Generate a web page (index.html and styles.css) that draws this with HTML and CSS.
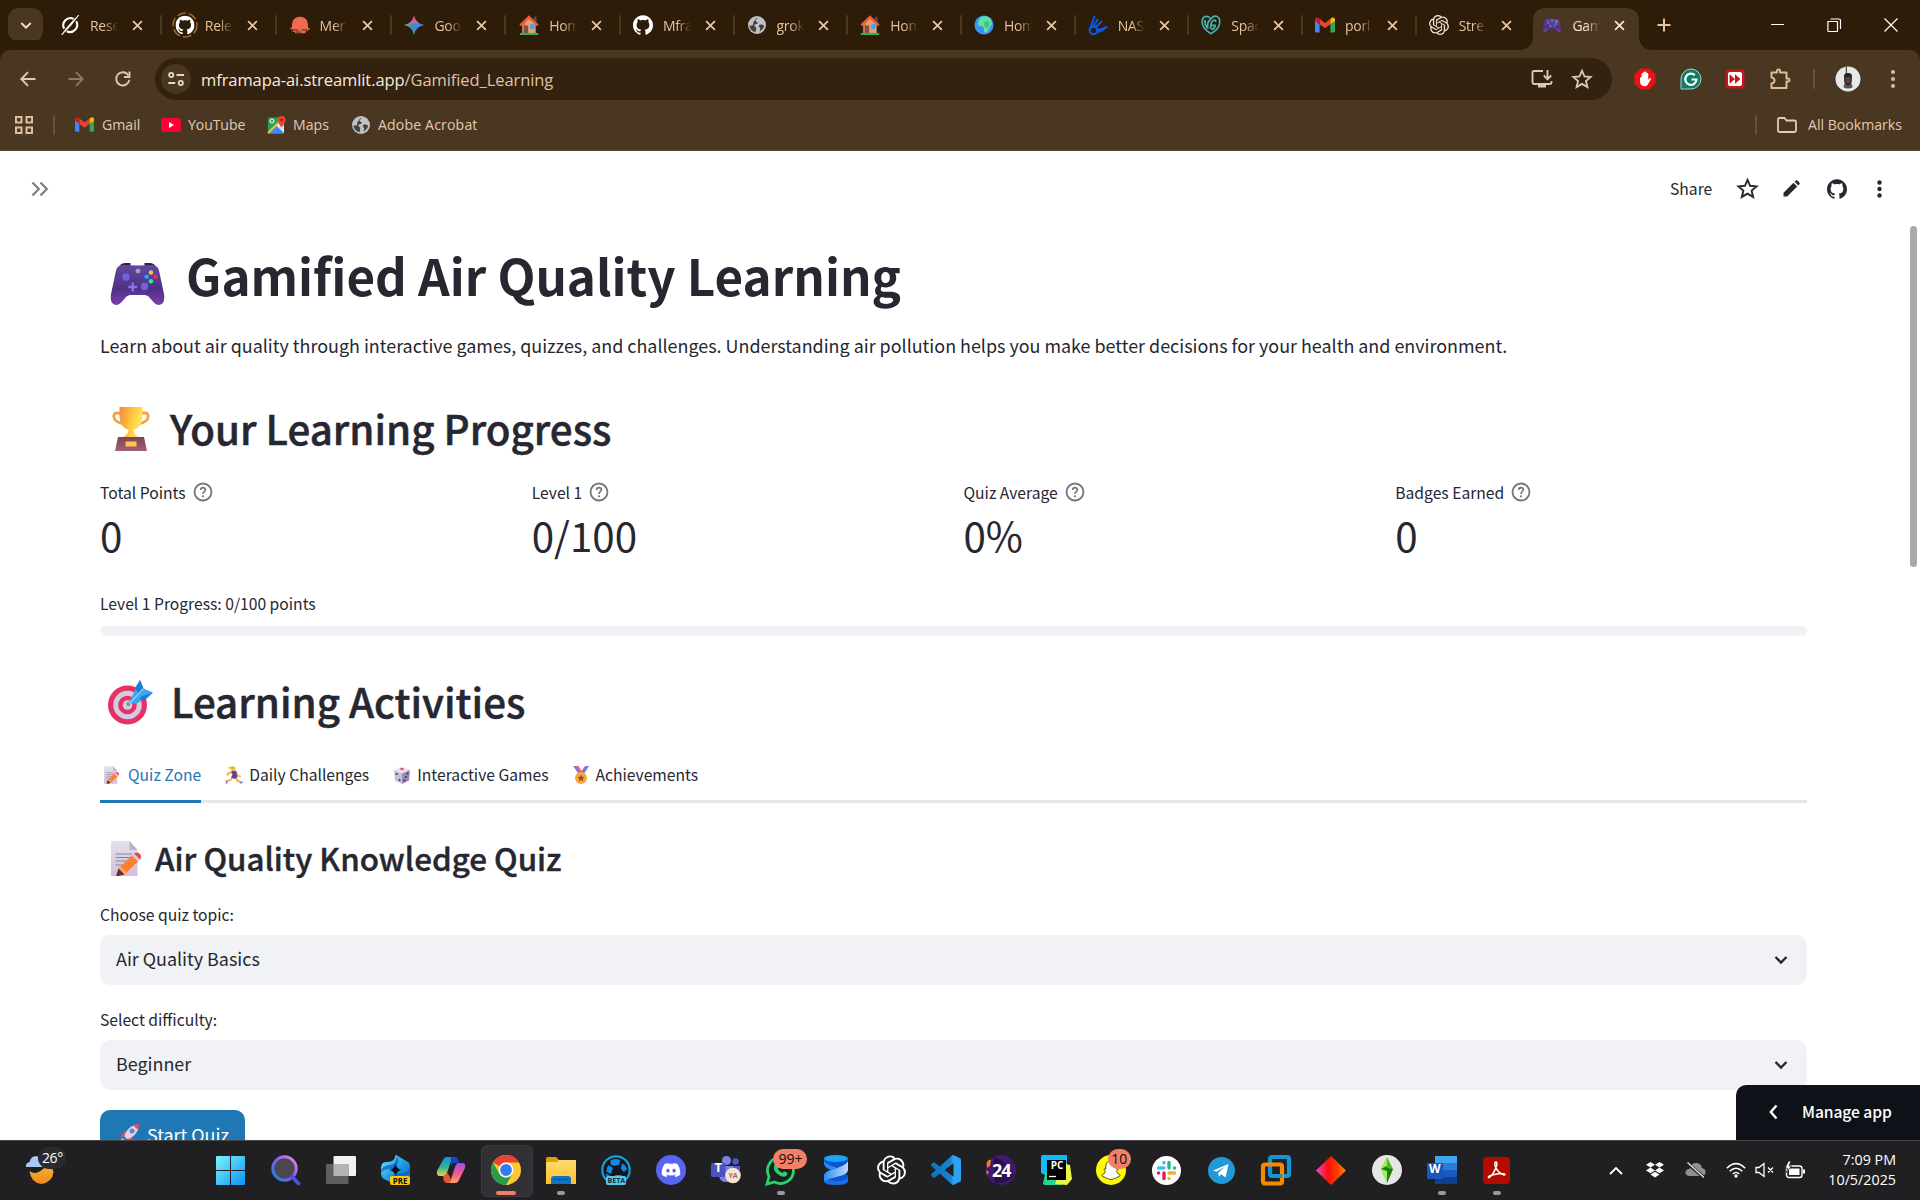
FILE: index.html
```html
<!DOCTYPE html>
<html lang="en">
<head>
<meta charset="utf-8">
<title>Gamified Air Quality Learning</title>
<link rel="stylesheet" href="styles.css">
</head>
<body>
<svg class="defs" width="0" height="0" aria-hidden="true">
  <defs>
    <linearGradient id="gPad" x1="0" y1="0" x2="0" y2="1"><stop offset="0" stop-color="#5f4aa0"/><stop offset=".6" stop-color="#4f3087"/><stop offset="1" stop-color="#7a3fae"/></linearGradient>
    <linearGradient id="gCup" x1="0" y1="0" x2="1" y2=".3"><stop offset="0" stop-color="#f5873f"/><stop offset=".55" stop-color="#ffc23e"/><stop offset="1" stop-color="#ffe95c"/></linearGradient>
    <linearGradient id="gBase" x1="0" y1="0" x2="0" y2="1"><stop offset="0" stop-color="#7a4458"/><stop offset="1" stop-color="#a3606f"/></linearGradient>
    <linearGradient id="gPaper" x1="0" y1="0" x2="0" y2="1"><stop offset="0" stop-color="#e4e0ea"/><stop offset="1" stop-color="#cfc0dc"/></linearGradient>
    <linearGradient id="gWin" x1="0" y1="0" x2="1" y2="1"><stop offset="0" stop-color="#7df3ff"/><stop offset="1" stop-color="#0a94f5"/></linearGradient>
    <linearGradient id="gFind" x1="1" y1="0" x2="0" y2="1"><stop offset="0" stop-color="#f08ad8"/><stop offset=".45" stop-color="#8a5cf0"/><stop offset="1" stop-color="#1285e0"/></linearGradient>
    <linearGradient id="gBlue" x1="0" y1="0" x2="1" y2="1"><stop offset="0" stop-color="#74ecff"/><stop offset=".5" stop-color="#1f9fe6"/><stop offset="1" stop-color="#0b5fc2"/></linearGradient>
    <linearGradient id="gCopA" x1="0" y1="0" x2="0" y2="1"><stop offset="0" stop-color="#1a8be8"/><stop offset=".5" stop-color="#27b39b"/><stop offset="1" stop-color="#f2d03a"/></linearGradient>
    <linearGradient id="gCopB" x1="0" y1="0" x2="0" y2="1"><stop offset="0" stop-color="#a14df0"/><stop offset=".5" stop-color="#f0568f"/><stop offset="1" stop-color="#ffa05c"/></linearGradient>
    <linearGradient id="gFold" x1="0" y1="0" x2="0" y2="1"><stop offset="0" stop-color="#ffdc6e"/><stop offset="1" stop-color="#ffc02e"/></linearGradient>
    <linearGradient id="gDia" x1="0" y1="0" x2="1" y2="0"><stop offset="0" stop-color="#e64fc0"/><stop offset=".4" stop-color="#ff0c0c"/><stop offset=".7" stop-color="#ff3c00"/><stop offset="1" stop-color="#ff8a00"/></linearGradient>
    <linearGradient id="gGem" x1="0" y1="0" x2="0" y2="1"><stop offset="0" stop-color="#ea4335"/><stop offset=".35" stop-color="#c46ab0"/><stop offset=".55" stop-color="#3b82f6"/><stop offset="1" stop-color="#34a853"/></linearGradient>
    <linearGradient id="gGem2" x1="0" y1="0" x2="1" y2="0"><stop offset="0" stop-color="#fbbc04"/><stop offset=".4" stop-color="#3ba55d" stop-opacity=".5"/><stop offset=".6" stop-color="#3b82f6" stop-opacity=".6"/><stop offset="1" stop-color="#3b82f6"/></linearGradient>
    <linearGradient id="gMoon" x1="0" y1="0" x2="0" y2="1"><stop offset="0" stop-color="#f7b53a"/><stop offset="1" stop-color="#f08a1c"/></linearGradient>
    <linearGradient id="gCode" x1="0" y1="0" x2="1" y2="0"><stop offset="0" stop-color="#1173bd"/><stop offset=".65" stop-color="#1684d0"/><stop offset=".75" stop-color="#2ba5f3"/><stop offset="1" stop-color="#2ba5f3"/></linearGradient>
    <linearGradient id="gRib" x1="0" y1="0" x2="1" y2="0"><stop offset="0" stop-color="#2a8df5"/><stop offset="1" stop-color="#c4d8ff"/></linearGradient>

    <symbol id="close" viewBox="0 0 12 12"><path d="M1.200 1.200l9.600 9.600M10.800 1.200l-9.600 9.600" stroke="currentColor" stroke-width="2" fill="none"/></symbol>
    <symbol id="github" viewBox="0 0 24 24"><path fill="currentColor" d="M12 .297c-6.63 0-12 5.373-12 12 0 5.303 3.438 9.8 8.205 11.385.6.113.82-.258.82-.577 0-.285-.01-1.04-.015-2.04-3.338.724-4.042-1.61-4.042-1.61C4.422 18.07 3.633 17.7 3.633 17.7c-1.087-.744.084-.729.084-.729 1.205.084 1.838 1.236 1.838 1.236 1.07 1.835 2.809 1.305 3.495.998.108-.776.417-1.305.76-1.605-2.665-.3-5.466-1.332-5.466-5.93 0-1.31.465-2.38 1.235-3.22-.135-.303-.54-1.523.105-3.176 0 0 1.005-.322 3.3 1.23.96-.267 1.98-.399 3-.405 1.02.006 2.04.138 3 .405 2.28-1.552 3.285-1.23 3.285-1.23.645 1.653.24 2.873.12 3.176.765.84 1.23 1.91 1.23 3.22 0 4.61-2.805 5.625-5.475 5.92.42.36.81 1.096.81 2.22 0 1.606-.015 2.896-.015 3.286 0 .315.21.69.825.57C20.565 22.092 24 17.592 24 12.297c0-6.627-5.373-12-12-12"/></symbol>
    <symbol id="openai" viewBox="0 0 24 24"><path fill="currentColor" d="M22.2819 9.8211a5.9847 5.9847 0 0 0-.5157-4.9108 6.0462 6.0462 0 0 0-6.5098-2.9A6.0651 6.0651 0 0 0 4.9807 4.1818a5.9847 5.9847 0 0 0-3.9977 2.9 6.0462 6.0462 0 0 0 .7427 7.0966 5.98 5.98 0 0 0 .511 4.9107 6.051 6.051 0 0 0 6.5146 2.9001A5.9847 5.9847 0 0 0 13.2599 24a6.0557 6.0557 0 0 0 5.7718-4.2058 5.9894 5.9894 0 0 0 3.9977-2.9001 6.0557 6.0557 0 0 0-.7475-7.0729zm-9.022 12.6081a4.4755 4.4755 0 0 1-2.8764-1.0408l.1419-.0804 4.7783-2.7582a.7948.7948 0 0 0 .3927-.6813v-6.7369l2.02 1.1686a.071.071 0 0 1 .038.052v5.5826a4.504 4.504 0 0 1-4.4945 4.4944zm-9.6607-4.1254a4.4708 4.4708 0 0 1-.5346-3.0137l.142.0852 4.783 2.7582a.7712.7712 0 0 0 .7806 0l5.8428-3.3685v2.3324a.0804.0804 0 0 1-.0332.0615L9.74 19.9502a4.4992 4.4992 0 0 1-6.1408-1.6464zM2.3408 7.8956a4.485 4.485 0 0 1 2.3655-1.9728V11.6a.7664.7664 0 0 0 .3879.6765l5.8144 3.3543-2.0201 1.1685a.0757.0757 0 0 1-.071 0l-4.8303-2.7865A4.504 4.504 0 0 1 2.3408 7.872zm16.5963 3.8558L13.1038 8.364 15.1192 7.2a.0757.0757 0 0 1 .071 0l4.8303 2.7913a4.4944 4.4944 0 0 1-.6765 8.1042v-5.6772a.79.79 0 0 0-.407-.667zm2.0107-3.0231l-.142-.0852-4.7735-2.7818a.7759.7759 0 0 0-.7854 0L9.409 9.2297V6.8974a.0662.0662 0 0 1 .0284-.0615l4.8303-2.7866a4.4992 4.4992 0 0 1 6.6802 4.66zM8.3065 12.863l-2.02-1.1638a.0804.0804 0 0 1-.038-.0567V6.0742a4.4992 4.4992 0 0 1 7.3757-3.4537l-.142.0805L8.704 5.459a.7948.7948 0 0 0-.3927.6813zm1.0976-2.3654l2.602-1.4998 2.6069 1.4998v2.9994l-2.5974 1.4997-2.6067-1.4997Z"/></symbol>
    <symbol id="gmail" viewBox="0 0 24 18"><path fill="#4285f4" d="M0 3v13.500C0 17.300.7 18 1.600 18H5.500V8z"/><path fill="#34a853" d="M24 3v13.500c0 .8-.7 1.500-1.600 1.500H18.500V8z"/><path fill="#ea4335" d="M5.500 8V1.500L12 6.500l6.500-5V8L12 13z"/><path fill="#c5221f" d="M0 2.500C0 .3 2.400-.8 4 .4l1.500 1.100V8.200L0 4.200z"/><path fill="#fbbc04" d="M24 2.500C24 .3 21.600-.8 20 .4l-1.500 1.100V8.200L24 4.200z"/></symbol>
    <symbol id="house" viewBox="0 0 24 24"><path fill="#e7a06a" d="M4 11l8-7 8 7v11H4z"/><path fill="#c9784f" d="M4 11l3-2v13H4z"/><path fill="#5c5048" d="M18 2h3v7l-3-3z"/><path d="M1.500 12.500L12 2.500l10.500 10" fill="none" stroke="#f2583e" stroke-width="3"/><path fill="#8a4b43" d="M6 12.500h5V22H6z"/><path fill="#35a7f0" d="M13.500 11h5v6h-5z"/><path fill="#2fae5d" d="M1 21.500h22V24H1z"/></symbol>
    <symbol id="globe" viewBox="0 0 24 24"><circle cx="12" cy="12" r="12" fill="#bfc2c5"/><path fill="#45413d" d="M13 2.500c-1 2-3 1.800-3 3.800 0 1.500 3 1 3 3 0 1.700-4 1-4.500 3C8 14 11 14 11 16.500c0 2-1 3-.5 5C5.500 21 2 17 2 12c3 2 5 .5 5-2 0-2 1-3 2-4 .8-1 .5-3 4-3.500zM15 12c2-1 5-.5 6.500 1-.5 3-3 6-6 7.500 0-2 1.500-3 .5-4.500-1-1-2.500-3-1-4z"/></symbol>
    <symbol id="earth" viewBox="0 0 24 24"><circle cx="12" cy="12" r="11.500" fill="#3b94f5"/><path fill="#5fe3a0" d="M8 3c5-3 10-1 12 2l2 6c-2 1-2 3-4 5-1 3-3 6-5 5-2-2 0-5-2-7-2-1-6 0-6-3 0-4 1-6 3-8z"/><path fill="#3fc489" d="M12 8l5-1 2 4-3 5-3-1-1-4z"/></symbol>
    <symbol id="pad" viewBox="0 0 54 42"><path fill="#3b1a4a" d="M9 3.500Q10 0 15 0h5v6H8zM45 3.500Q44 0 39 0h-5v6h12z"/><path fill="url(#gPad)" d="M12 2q15 .8 30 0 5 0 6.500 5.500L53.500 31q1.500 10-5 11-3.500 0-6.500-4l-4-4.500Q36.500 32 34 32H20q-2.500 0-4 1.500L12 38q-3 4-6.500 4-6.500-1-5-11L5.500 7.500Q7 2 12 2z"/><circle cx="15.500" cy="14" r="3.700" fill="#6f63d8"/><circle cx="34" cy="23.500" r="3.700" fill="#6f63d8"/><path d="M22.200 19.500v9M17.700 24h9" stroke="#8277ea" stroke-width="2.400"/><circle cx="27.500" cy="8" r="2.400" fill="#a79ea8"/><circle cx="40.500" cy="9.500" r="2.300" fill="#ffbc4b"/><circle cx="36.200" cy="13.800" r="2.300" fill="#1aa9ff"/><circle cx="45" cy="13.800" r="2.300" fill="#f7284f"/><circle cx="40.500" cy="18.200" r="2.300" fill="#35e59b"/></symbol>
    <symbol id="memo" viewBox="0 0 30 35"><path fill="url(#gPaper)" d="M0 0h18.500L26.500 9v26H0z"/><path fill="#bdb2cb" d="M18.500 0l8 9h-8z"/><path d="M4.500 13h16.500M4.500 16.500h16.500M4.500 20h15M4.500 24h9" stroke="#8b8295" stroke-width="1.100"/><path fill="#ff7f32" d="M7.500 27.500L21 14.500l6 6L13.500 33.500z"/><path fill="#fda85a" d="M7.500 27.500l2-2 6 6-2 2z"/><path fill="#c9cdea" d="M21 14.500l2-2 6 6-2 2z"/><path fill="#f4463e" d="M23 12.500q3-2 5.500 0t1 5.500l-.5.500z"/><path fill="#5d3038" d="M5 35l2.500-7.500 6 6L7 35z"/></symbol>
    <symbol id="help" viewBox="0 0 20 20"><circle cx="10" cy="10" r="8.500" fill="none" stroke="#75767e" stroke-width="1.800"/><path d="M7.600 7.900q.2-2.300 2.400-2.300t2.400 2q0 1.200-1.200 2T10 11.900" fill="none" stroke="#75767e" stroke-width="1.700"/><circle cx="10" cy="14.300" r="1.100" fill="#75767e"/></symbol>
    <symbol id="down" viewBox="0 0 14 10"><path d="M1.500 2L7 7.500 12.500 2" fill="none" stroke="#262730" stroke-width="2.400"/></symbol>
    <symbol id="star" viewBox="0 0 24 24"><path d="M12 3l2.700 6.200 6.700.6-5.100 4.400 1.600 6.600L12 17.300l-5.900 3.500 1.600-6.600-5.100-4.400 6.700-.6z" fill="none" stroke="currentColor" stroke-width="2"/></symbol>
  </defs>
</svg>

<div class="screen">
  <div class="tabstrip">
    <div class="tabsearch"><svg width="12" height="9" viewBox="0 0 14 10"><path d="M1.500 2L7 7.500 12.500 2" fill="none" stroke="#f3dcc4" stroke-width="2.400"/></svg></div>
    <div class="tabs">
      <div class="tab"><svg class="fav" viewBox="0 0 24 24"><path d="M19.500 7.500A8.700 8.700 0 0 1 8 19.500M16.500 4.600A8.700 8.700 0 0 0 5 16.500" fill="none" stroke="#fff" stroke-width="2.500"/><path d="M2 24Q8 14 22.500 0 14 13 2 24z" fill="#fff" stroke="#fff"/></svg><span class="name">Rese</span><svg class="x"><use href="#close"/></svg></div>
      <div class="tab"><svg class="fav ring" viewBox="0 0 26 26"><circle cx="13" cy="13" r="12" fill="none" stroke="#9a6a30" stroke-width="1.500" stroke-dasharray="9 3"/><circle cx="13" cy="13" r="9" fill="#2d1c08"/><svg x="3.500" y="3.500" width="19" height="19" color="#fff"><use href="#github"/></svg></svg><span class="name">Rele</span><svg class="x"><use href="#close"/></svg></div>
      <div class="tab"><svg class="fav" viewBox="0 0 24 24"><path fill="#ee6c4d" d="M2.500 15C1.500 6 6 2 12 2s10.500 4 9.500 13l2 1v2h-2v1.500h-3V22H6v-2H3v-3H.5v-2z"/><path d="M2 18h8M14 18h8M7 20.500h6" stroke="#2d1c08" stroke-width="1"/></svg><span class="name">Mer</span><svg class="x"><use href="#close"/></svg></div>
      <div class="tab"><svg class="fav" viewBox="0 0 24 24"><path fill="url(#gGem)" d="M12 0q2 10 12 12-10 2-12 12-2-10-12-12Q10 10 12 0z"/><path fill="url(#gGem2)" d="M12 7q1 4.500 12 5-10 2-12 6-2-5-12-6 11-.5 12-5z"/></svg><span class="name">Goo</span><svg class="x"><use href="#close"/></svg></div>
      <div class="tab"><svg class="fav"><use href="#house"/></svg><span class="name">Hom</span><svg class="x"><use href="#close"/></svg></div>
      <div class="tab"><svg class="fav white"><use href="#github"/></svg><span class="name">Mfra</span><svg class="x"><use href="#close"/></svg></div>
      <div class="tab"><svg class="fav small"><use href="#globe"/></svg><span class="name">grok</span><svg class="x"><use href="#close"/></svg></div>
      <div class="tab"><svg class="fav"><use href="#house"/></svg><span class="name">Hom</span><svg class="x"><use href="#close"/></svg></div>
      <div class="tab"><svg class="fav"><use href="#earth"/></svg><span class="name">Hom</span><svg class="x"><use href="#close"/></svg></div>
      <div class="tab"><svg class="fav" viewBox="0 0 24 24"><path d="M2 18L8 1M6 14l6-9M9 15l8-8M11 18q7-1 12-4-6 5-12 7" fill="none" stroke="#0b57e8" stroke-width="2.400"/><circle cx="6.500" cy="18.500" r="4.500" fill="none" stroke="#0b57e8" stroke-width="2.600"/></svg><span class="name">NAS</span><svg class="x"><use href="#close"/></svg></div>
      <div class="tab"><svg class="fav" viewBox="0 0 24 24"><path d="M12 22.500C4 18 .8 12 1.500 6.500 2.200 1.500 7 0 11 3.500M12 22.500c8-4.500 11.200-10.500 10.500-16C21.800 1.500 17.500 0 13.500 3 8.500 6.500 7 12 8.500 16.500M12.500 12.500H17q-.5 4-3 4.500-2.800 0-2.500-4 .8-6 4.500-7 2 0 1.500 2.500M5 6q-1 5 2.500 9.500" fill="none" stroke="#46b5b1" stroke-width="2"/></svg><span class="name">Spac</span><svg class="x"><use href="#close"/></svg></div>
      <div class="tab"><svg class="fav"><use href="#gmail"/></svg><span class="name">porl</span><svg class="x"><use href="#close"/></svg></div>
      <div class="tab"><svg class="fav cream"><use href="#openai"/></svg><span class="name">Stre</span><svg class="x"><use href="#close"/></svg></div>
      <div class="tab active"><svg class="fav small"><use href="#pad"/></svg><span class="name">Gam</span><svg class="x"><use href="#close"/></svg></div>
    </div>
    <svg class="newtab" width="14" height="14" viewBox="0 0 14 14"><path d="M7 .5v13M.5 7h13" stroke="#e6c39f" stroke-width="2"/></svg>
    <div class="winbtns">
      <svg width="14" height="14" viewBox="0 0 14 14"><path d="M1 6.500h13" stroke="#fff"/></svg>
      <svg width="14" height="14" viewBox="0 0 14 14"><path d="M1 3.500h9q.5 0 .5.500v9q0 .5-.5.500H1.500Q1 13.500.900 13V4zM3.500 1h8.500q1.500 0 1.500 1.500V11" fill="none" stroke="#fff" stroke-width="1.200"/></svg>
      <svg width="14" height="14" viewBox="0 0 14 14"><path d="M.5.500l13 13M13.500.5l-13 13" stroke="#fff" stroke-width="1.200"/></svg>
    </div>
  </div>

  <div class="toolbar">
    <div class="nav">
      <svg width="16" height="16" viewBox="0 0 16 16"><path d="M15.500 8H1.500M8 1.200L1.300 8 8 14.800" fill="none" stroke="#e6c8a8" stroke-width="1.900"/></svg>
      <svg width="16" height="16" viewBox="0 0 16 16"><path d="M.5 8h14M8 1.200L14.700 8 8 14.800" fill="none" stroke="#8d7760" stroke-width="1.900"/></svg>
      <svg width="16" height="16" viewBox="0 0 16 16"><path d="M14.300 8.800A6.600 6.600 0 1 1 13.300 4.200M14.500.6V6H9" fill="none" stroke="#e6c8a8" stroke-width="1.900"/></svg>
    </div>
    <div class="omnibox">
      <span class="siteinfo"><svg width="16" height="14" viewBox="0 0 16 14"><g fill="none" stroke="#e8d8c6" stroke-width="1.800"><circle cx="3.200" cy="3" r="2.100"/><path d="M8.500 3H16M.3 11h7"/><circle cx="12.800" cy="11" r="2.100"/></g></svg></span>
      <span class="url">mframapa-ai.streamlit.app<span class="path">/Gamified_Learning</span></span>
      <svg class="inst" width="22" height="20" viewBox="0 0 22 20"><path d="M12 2H3q-1.500 0-1.500 1.500v10Q1.500 15 3 15h16q1.500 0 1.500-1.500V12" fill="none" stroke="#dcc9b4" stroke-width="1.900"/><path fill="#dcc9b4" d="M7 15h8v3.500H7z"/><path d="M16.500 1v9M12.800 6.500l3.700 3.700 3.700-3.700" fill="none" stroke="#dcc9b4" stroke-width="1.900"/></svg>
      <svg class="bmstar" width="22" height="22"><use href="#star"/></svg>
    </div>
    <div class="ext">
      <svg width="22" height="22" viewBox="0 0 22 22"><path fill="#ee1010" d="M6.500.5h9l6 6v9l-6 6h-9l-6-6v-9z"/><path fill="#fff" d="M6 9l1.500 1V5.500q1-1 1.700 0V9V4q1-1 1.700 0V9V4q1-1 1.700 0V9V5.500q1-1 1.700 0V12l1.500-1.800q1.500-.5 1.300.8L13.500 17q-1 1.300-3 1.300Q6.500 18 6 14z"/></svg>
      <svg width="22" height="22" viewBox="0 0 22 22"><path fill="#0f7d66" stroke="#a9cfc6" d="M11 1a10 10 0 0 1 0 20H1V11A10 10 0 0 1 11 1z"/><path d="M14.800 7.200A5.600 5.600 0 1 0 16.500 11.500H11.500" fill="none" stroke="#fff" stroke-width="2.200"/></svg>
      <svg width="20" height="20" viewBox="0 0 20 20"><rect x=".5" y=".5" width="19" height="19" rx="3" fill="#c8161a"/><rect x="3" y="3" width="14" height="14" rx="2" fill="#fff"/><path fill="#c8161a" d="M4.500 5.200L10 10l-5.500 4.800zM10 5.200l5.500 4.800-5.500 4.800z"/></svg>
      <svg width="22" height="22" viewBox="0 0 22 22"><path d="M2.500 4.500H8q-.5-3 1.500-3t1.500 3h6.500v6q3-.5 3 1.500t-3 1.500V20H2.500v-4.500q3-.3 3-3t-3-3z" fill="none" stroke="#e0bd97" stroke-width="2" stroke-linejoin="round"/></svg>
      <i class="sep"></i>
      <svg width="26" height="26" viewBox="0 0 26 26"><circle cx="13" cy="13" r="12.500" fill="#e8e8e6"/><path fill="#26232b" d="M10.800.8h1V8h-1zM9 10q0-3 4-3t4 3l-.3 6q-.7 4-3.700 4t-3.700-4z"/><path fill="#5b4033" d="M10.500 11h5v5q-1 2-2.500 2t-2.500-2z"/><path fill="#4d5568" d="M9 18q4 3 8 0l.5 3.500q-4.500 2-9 0z"/></svg>
      <svg width="6" height="20" viewBox="0 0 6 20" fill="#e0bd97"><circle cx="3" cy="3" r="2"/><circle cx="3" cy="10" r="2"/><circle cx="3" cy="17" r="2"/></svg>
    </div>
  </div>

  <div class="bookmarks">
    <svg class="apps" width="18" height="18" viewBox="0 0 18 18"><g fill="none" stroke="#dcbfa2" stroke-width="2"><path d="M1 1h5.500v5.500H1zM11.500 1H17v5.500h-5.500zM1 11.500h5.500V17H1zM11.500 11.500H17V17h-5.500z"/></g></svg>
    <i class="sep"></i>
    <span class="bm gm"><svg width="19" height="15"><use href="#gmail"/></svg>Gmail</span>
    <span class="bm yt"><svg width="20" height="14" viewBox="0 0 20 14"><rect width="20" height="14" rx="3" fill="#f03"/><path fill="#fff" d="M8 4l5 3-5 3z"/></svg>YouTube</span>
    <span class="bm mp"><svg width="18" height="18" viewBox="0 0 18 18"><rect y="1.500" width="16" height="16" rx="1" fill="#2ba24c"/><path fill="#4285f4" d="M0 17.500L8 9l8 8.500z"/><path fill="#fff" d="M8.500 9.500L16 3v14z"/><path d="M0 17L15 2.500" stroke="#f5c21b" stroke-width="2.200"/><path fill="#e0e3e6" d="M8.500 9.500l7.500 7v-7L12 6z"/><circle cx="4" cy="5" r="2" fill="none" stroke="#fff"/><path fill="#ea4335" d="M13.500 11.500Q9.800 6.500 9.800 4a3.900 3.900 0 0 1 7.800 0q0 2.500-4.100 7.500z"/><circle cx="13.600" cy="4" r="1.400" fill="#a32018"/></svg>Maps</span>
    <span class="bm aa"><svg width="18" height="18"><use href="#globe"/></svg>Adobe Acrobat</span>
    <span class="allbm"><i class="sep"></i><svg width="20" height="16" viewBox="0 0 20 16"><path d="M1 2.500Q1 1 2.500 1h5l2 2.500h8Q19 3.500 19 5v8.500q0 1.500-1.500 1.500h-15Q1 15 1 13.500z" fill="none" stroke="#e0ccb8" stroke-width="1.800"/></svg><span>All Bookmarks</span></span>
  </div>

  <div class="page">
    <div class="appbar">
      <svg class="expand" width="18" height="16" viewBox="0 0 18 16"><path d="M1.500 1.500L7.800 8 1.500 14.500M9.500 1.500L15.800 8l-6.300 6.500" fill="none" stroke="#7c7d85" stroke-width="2.200"/></svg>
      <div class="actions">
        <span>Share</span>
        <svg class="a1" width="23" height="23"><use href="#star"/></svg>
        <svg class="a2" width="17" height="17" viewBox="0 0 17 17"><path fill="#262730" d="M.5 16.500V12.800L10.500 2.800l3.700 3.700-10 10zM11.600 1.700l1.100-1.100q.9-.8 1.800 0l1.900 1.900q.8.9 0 1.800l-1.100 1.100z"/></svg>
        <svg class="a3" width="20" height="20"><use href="#github"/></svg>
        <svg class="a4" width="5" height="18" viewBox="0 0 5 18" fill="#262730"><circle cx="2.500" cy="2.500" r="2.200"/><circle cx="2.500" cy="9" r="2.200"/><circle cx="2.500" cy="15.500" r="2.200"/></svg>
      </div>
    </div>

    <div class="main">
      <h1><svg width="55" height="42" class="i-pad"><use href="#pad"/></svg>Gamified Air Quality Learning</h1>
      <p class="lead">Learn about air quality through interactive games, quizzes, and challenges. Understanding air pollution helps you make better decisions for your health and environment.</p>

      <h2 class="h-prog"><svg class="i-cup" width="38" height="44" viewBox="0 0 38 44"><path d="M9 7Q2 4 1.800 9.500 2 15 12 17M29 7q7-3 7.200 2.500Q36 15 26 17" fill="none" stroke="#f3a53b" stroke-width="2.800"/><path fill="url(#gCup)" d="M7.500 0h23v10q-1 11-9 13 0 4 5.500 7H11q5.500-3 5.500-7-8-2-9-13z"/><path fill="url(#gBase)" d="M6 30h26l3 14H3z"/><rect x="13.500" y="34.500" width="11" height="5" fill="#fbc650"/></svg>Your Learning Progress</h2>
      <div class="metrics">
        <div class="metric"><div class="label">Total Points<svg width="20" height="20"><use href="#help"/></svg></div><div class="value">0</div></div>
        <div class="metric"><div class="label">Level 1<svg width="20" height="20"><use href="#help"/></svg></div><div class="value">0/100</div></div>
        <div class="metric"><div class="label">Quiz Average<svg width="20" height="20"><use href="#help"/></svg></div><div class="value">0%</div></div>
        <div class="metric"><div class="label">Badges Earned<svg width="20" height="20"><use href="#help"/></svg></div><div class="value">0</div></div>
      </div>
      <div class="ptext">Level 1 Progress: 0/100 points</div>
      <div class="bar"></div>

      <h2 class="h-act"><svg class="i-dart" width="46" height="44" viewBox="0 0 46 44"><circle cx="19.500" cy="25" r="19.500" fill="#e23463"/><circle cx="19.500" cy="25" r="14.300" fill="#d5cbe0"/><circle cx="19.500" cy="25" r="9.300" fill="#e23463"/><circle cx="19.500" cy="25" r="4.800" fill="#d5cbe0"/><circle cx="20.500" cy="24" r="2" fill="#8a7f9c"/><path fill="#3ea6ee" d="M20.500 23.500l6.500-13 5-10.500 3.500 8.500L45 12.500l-9 6-7 5z"/><path fill="#1d7bdc" d="M27 8l5-8 3.500 8.500-5 5zM34 16l11-3.500-8 7.500-6-.5z"/><path d="M21 24L35.500 8.500" stroke="#7fd0fa" stroke-width="1.500"/></svg>Learning Activities</h2>
      <div class="subtabs">
        <span class="st on"><svg width="15" height="18"><use href="#memo"/></svg>Quiz Zone</span>
        <span class="st"><svg width="18" height="18" viewBox="0 0 18 18"><path d="M7.500 6.500l-4 .5-1.500 2.500M8 11l-2.500 3L1 15.500M11 11.500l1 3 4 1.500" fill="none" stroke="#f5b14a" stroke-width="1.900"/><path d="M11 6l1.500 3.500L16 10.500" fill="none" stroke="#f5b14a" stroke-width="1.700"/><path fill="#5b43a5" d="M6 5.200l5-.7 1.500 6.500-2.500 2-4-1.500 1.500-3z"/><circle cx="8" cy="2.600" r="2.400" fill="#f8b233"/><path d="M6.500 1.200L3.500 2.200" stroke="#f8b233" stroke-width="1.600"/><path d="M1.500 14.500v3.300M14.800 17l3-1" stroke="#8a7ad0" stroke-width="1.600"/></svg>Daily Challenges</span>
        <span class="st"><svg width="18" height="18" viewBox="0 0 18 18"><path fill="#e6dfee" d="M1 4l8-3.500L17 4l-8 3.500z"/><path fill="#c8bed6" d="M1 4l8 3.500V18l-7-3.500z"/><path fill="#9a8cab" d="M17 4L9 7.500V18l7-3.500z"/><ellipse cx="9" cy="3" rx="2" ry="1" fill="#e0446e"/><g fill="#463263"><circle cx="3.700" cy="8" r="1.100"/><circle cx="6.500" cy="14" r="1.100"/><circle cx="14.500" cy="7.500" r="1.100"/><circle cx="11.500" cy="14.500" r="1.100"/><circle cx="13" cy="11" r="1.100"/></g></svg>Interactive Games</span>
        <span class="st"><svg width="16" height="18" viewBox="0 0 16 18"><path fill="#5d82e8" d="M0 0h3.500l5 7H5z"/><path fill="#f4577c" d="M3 0h2.500l3 5L12 0h2L9.500 7.500h-3z"/><path fill="#5d82e8" d="M16 0h-3L8.500 7h3z"/><circle cx="8" cy="12" r="6" fill="#f9a938"/><path fill="#94502c" d="M8 8.500l1.100 2.300 2.500.3-1.800 1.700.5 2.500L8 14.100l-2.300 1.200.5-2.500-1.800-1.700 2.500-.3z"/></svg>Achievements</span>
      </div>

      <h3><svg class="i-memo" width="30" height="35"><use href="#memo"/></svg>Air Quality Knowledge Quiz</h3>
      <div class="flabel">Choose quiz topic:</div>
      <div class="select"><span>Air Quality Basics</span><svg width="14" height="10"><use href="#down"/></svg></div>
      <div class="flabel second">Select difficulty:</div>
      <div class="select"><span>Beginner</span><svg width="14" height="10"><use href="#down"/></svg></div>
      <div class="start"><svg width="21" height="21" viewBox="0 0 21 21"><path fill="#e8476c" d="M5 9l5-2-3 6-6 1zM13 17l1-5-5 3-2 6z"/><path fill="#dcd7e6" d="M5.500 13.500Q7 5 16 2l3.500 3Q17 14 8 16z"/><path fill="#e8476c" d="M15 2.200Q18 .5 20.500.8 20.500 3.500 19 6q-3-.5-4-3.800z"/><circle cx="13" cy="8" r="2.500" fill="#6b7fd8"/><path fill="#f9a23c" d="M0 20.500q1-5 4-5.500l2 2q-.5 3-6 3.500z"/></svg>Start Quiz</div>
    </div>

    <div class="scrollthumb"></div>
    <div class="manage"><svg width="9" height="16" viewBox="0 0 9 16"><path d="M7.500 1.500L1.800 8l5.700 6.500" fill="none" stroke="#fff" stroke-width="2.400"/></svg><span>Manage app</span></div>
  </div>

  <div class="taskbar">
    <div class="weather"><svg width="30" height="30" viewBox="0 0 30 30"><path fill="url(#gMoon)" d="M3.500 17q5 4 11 0t6-8q6 4 7 9-1 10-12 12Q5 29 3.500 17z"/><path fill="#a9c8f3" d="M0 13q-.5-4 3.500-5Q5 2 10 2q5 1 6 6 2 2 1 5z"/></svg><span>26°</span></div>
    <div class="apps-row">
      <div class="app"><svg width="29" height="29" viewBox="0 0 29 29"><path fill="url(#gWin)" d="M0 1q0-1 1-1h13v14H0zM15 0h13q1 0 1 1v13H15zM0 15h14v14H1q-1 0-1-1zM15 15h14v13q0 1-1 1H15z"/></svg></div>
      <div class="app"><svg width="30" height="30" viewBox="0 0 30 30"><circle cx="13.500" cy="13.500" r="11.700" fill="#4a484c" stroke="url(#gFind)" stroke-width="3"/><path d="M21.500 22l6 6.500" stroke="#4a52e0" stroke-width="4" stroke-linecap="round"/></svg></div>
      <div class="app"><svg width="30" height="28" viewBox="0 0 30 28"><rect x="7.500" width="22.500" height="20" rx="1" fill="#f2f2f2"/><rect y="8" width="22.500" height="20" rx="1" fill="#5f5f5f"/><path fill="#b4b4b4" d="M7.500 8h15v12h-15z"/></svg></div>
      <div class="app"><svg width="30" height="30" viewBox="0 0 30 30"><path fill="url(#gBlue)" d="M1 9q1-2 5-2 7 0 8-5 0-3 2-1.500L27 7q2 1 2 4v9q0 3-3 4l-9 5q-2 1-4 0L3 24q-3-2-3-5v-7z"/><path fill="#0a60c8" d="M16 1q2 3 1 7-2 6-8 6-7 0-9 4v-2q1-5 8-6 7 0 8-9zM29 12v5q-2 4-8 5t-8 7l-4-2q1-8 10-9 8 0 10-6z" opacity=".75"/><path fill="#0b1220" d="M14.500 9q1.200 5 6 6-4.800 1.200-6 6-1.200-4.800-6-6 4.800-1 6-6z"/></svg><b class="tag pre">PRE</b></div>
      <div class="app"><svg width="28" height="26" viewBox="0 0 28 26"><path fill="url(#gCopA)" d="M6 3q1-3 4-3h8q-3 0-4 4l-4 12q-1 3-4 3H3q-4 0-3-5z"/><path fill="#1645c0" d="M14 0h4q3 0 3.500 3.500L22 6h-4q-3 0-4 2z"/><path fill="url(#gCopB)" d="M22 23q-1 3-4 3h-8q3 0 4-4l4-12q1-4 4-4h3q4 0 3 5z"/><path fill="#e8542e" d="M6 19q3 0 4.500-3l2 3q1.500 3 1 5t-3.500 2q-3 0-3.500-4z"/></svg></div>
      <div class="app open"><svg width="30" height="30" viewBox="0 0 30 30"><circle cx="15" cy="15" r="15" fill="#fcc934"/><path fill="#ea4335" d="M2 7.500A15 15 0 0 1 28 7.500H15a7.500 7.500 0 0 0-6.500 3.800z"/><path fill="#2a9d4a" d="M2 7.500A15 15 0 0 0 15 30l6.500-11.250a7.500 7.500 0 0 1-13 0z"/><circle cx="15" cy="15" r="7.400" fill="#fff"/><circle cx="15" cy="15" r="5.900" fill="#2d7cf0"/></svg></div>
      <div class="app run"><svg width="30" height="27" viewBox="0 0 30 27"><path fill="#e0a00e" d="M0 2Q0 0 2 0h8l4 4v6H0z"/><path fill="url(#gFold)" d="M0 5h11l2-2h17v24H0z"/><path fill="#0f72c4" d="M5 22q0-3 3-3h14q3 0 3 3v5H5z"/><path d="M8 22.500h14" stroke="#0a4d8c" stroke-width="1.300"/></svg></div>
      <div class="app"><svg width="30" height="30" viewBox="0 0 30 30"><circle cx="15" cy="15" r="13.700" fill="#15161c" stroke="#149fd8" stroke-width="2.200"/><path fill="#1588e0" d="M9.500 5.500Q14 3 19 5l-.5 4.500-5 1.500-4-1.500zM21 8q4 2.500 5 6l-3 3-3-3zM7.500 10l4.500 3-2 6-4.500-2q-.5-4 2-7zM4.500 18.500l5.500 2.500 1.500 6q-5.500-2.500-7-8.500zM14 20h6l4 3q-4 4-9 4z"/></svg><b class="tag beta">BETA</b></div>
      <div class="app"><svg width="30" height="30" viewBox="0 0 30 30"><circle cx="15" cy="15" r="15" fill="#5865f2"/><g transform="translate(5.700 5.700) scale(.775)"><path fill="#fff" d="M20.317 4.3698a19.7913 19.7913 0 00-4.8851-1.5152.0741.0741 0 00-.0785.0371c-.211.3753-.4447.8648-.6083 1.2495-1.8447-.2762-3.68-.2762-5.4868 0-.1636-.3933-.4058-.8742-.6177-1.2495a.077.077 0 00-.0785-.037 19.7363 19.7363 0 00-4.8852 1.515.0699.0699 0 00-.0321.0277C.5334 9.0458-.319 13.5799.0992 18.0578a.0824.0824 0 00.0312.0561c2.0528 1.5076 4.0413 2.4228 5.9929 3.0294a.0777.0777 0 00.0842-.0276c.4616-.6304.8731-1.2952 1.226-1.9942a.076.076 0 00-.0416-.1057c-.6528-.2476-1.2743-.5495-1.8722-.8923a.077.077 0 01-.0076-.1277c.1258-.0943.2517-.1923.3718-.2914a.0743.0743 0 01.0776-.0105c3.9278 1.7933 8.18 1.7933 12.0614 0a.0739.0739 0 01.0785.0095c.1202.099.246.1981.3728.2924a.077.077 0 01-.0066.1276 12.2986 12.2986 0 01-1.873.8914.0766.0766 0 00-.0407.1067c.3604.698.7719 1.3628 1.225 1.9932a.076.076 0 00.0842.0286c1.961-.6067 3.9495-1.5219 6.0023-3.0294a.077.077 0 00.0313-.0552c.5004-5.177-.8382-9.6739-3.5485-13.6604a.061.061 0 00-.0312-.0286zM8.02 15.3312c-1.1825 0-2.1569-1.0857-2.1569-2.419 0-1.3332.9555-2.4189 2.157-2.4189 1.2108 0 2.1757 1.0952 2.1568 2.419 0 1.3332-.9555 2.4189-2.1569 2.4189zm7.9748 0c-1.1825 0-2.1569-1.0857-2.1569-2.419 0-1.3332.9554-2.4189 2.1569-2.4189 1.2108 0 2.1757 1.0952 2.1568 2.419 0 1.3332-.946 2.4189-2.1568 2.4189Z"/></g></svg></div>
      <div class="app"><svg width="30" height="28" viewBox="0 0 30 28"><circle cx="15.500" cy="4.500" r="4.500" fill="#7b83eb"/><circle cx="24.500" cy="5.500" r="3.200" fill="#5059c9"/><path fill="#7b83eb" d="M8 10h14v10q-1 6-7 6t-7-6z"/><path fill="#5059c9" d="M22 10h7v10l-7 3z"/><rect y="7" width="14.500" height="14" rx="1.500" fill="#4b53bc"/><circle cx="22" cy="19.500" r="7.800" fill="#f6e3d3"/></svg><b class="teams-t">T</b><b class="teams-ya">YA</b></div>
      <div class="app run"><svg width="31" height="31" viewBox="0 0 31 31"><path d="M2 29l2-7.500A13 13 0 1 1 9.500 27z" fill="#202024" stroke="#27d367" stroke-width="2.800"/><path fill="#27d367" d="M10.500 8.500q1.800-.8 2.500.8l1 2.500-1.300 2q1.500 3 4.600 4.200l1.700-1.800 3.300 1.600q.3 3-3 4-3.300.3-7.300-3.300T9 11.500q.2-2.200 1.500-3z"/></svg><b class="badge wide">99+</b></div>
      <div class="app"><svg width="24" height="30" viewBox="0 0 24 30"><path fill="#0a55d0" d="M0 3.500q12 7 24 0V9q-3 5-12 6Q2 15 0 9z"/><ellipse cx="12" cy="3.500" rx="12" ry="3.500" fill="#1fa3f5"/><path fill="#0a55d0" d="M0 20q2-5 12-5 9 0 12 6v5.500H0z"/><path fill="#1b6df0" d="M0 21v5.500Q1 30 12 30t12-3.500V22q-3 4-12 4-9-.5-12-5z"/><path fill="url(#gRib)" d="M24 6.500v9q-1 4-10 6-8 1.500-13.500 5Q0 25 0 21q0-4 8-6.500Q21 11 24 6.500z"/><path fill="#2a8df5" d="M0 4q0 4 6 6.500l7 2.500-6 2Q0 12 0 8z"/></svg></div>
      <div class="app white"><svg width="29" height="30"><use href="#openai"/></svg></div>
      <div class="app"><svg width="30" height="30" viewBox="0 0 24 24"><path fill="url(#gCode)" d="M23.150 2.587L18.210.21a1.494 1.494 0 0 0-1.705.29l-9.460 8.630-4.120-3.128a.999.999 0 0 0-1.276.057L.327 7.261A1 1 0 0 0 .326 8.740L3.899 12 .326 15.260a1 1 0 0 0 .001 1.479L1.650 17.940a.999.999 0 0 0 1.276.057l4.120-3.128 9.460 8.630a1.492 1.492 0 0 0 1.704.290l4.942-2.377A1.500 1.500 0 0 0 24 20.060V3.939a1.500 1.500 0 0 0-.850-1.352zm-5.146 14.861L10.826 12l7.178-5.448v10.896z"/></svg></div>
      <div class="app"><svg width="30" height="30" viewBox="0 0 30 30"><circle cx="15" cy="15" r="15" fill="#43186f"/><path fill="#2a0f4e" d="M8 2q14 4 20 18-8 10-20 8z"/><path fill="#f47a20" d="M.5 8Q2 4 5 5l-1 6-3 2zM0 15l3 2-2 3z"/></svg><b class="n24">24</b></div>
      <div class="app"><svg width="31" height="30" viewBox="0 0 31 30"><path fill="#0fbcf9" d="M2 0h24v12L8 22 0 18V2q0-2 2-2z"/><path fill="#1fd98b" d="M2 28l3-12 16 10v4H4q-2 0-2-2z"/><path fill="#e9f542" d="M21 8l8 2 2 14-5 6-12-1z"/><path fill="#000" d="M6 5h19v20H6z"/><path d="M8 21.500h7" stroke="#fff" stroke-width="1.300"/></svg><b class="pc">PC</b></div>
      <div class="app"><svg width="30" height="30" viewBox="0 0 30 30"><circle cx="15" cy="15" r="15" fill="#fffc00"/><path fill="#fff" stroke="#222" stroke-width=".8" d="M15 6q5 0 5.200 5v3q2-.5 2 .6-2 1.200-1.500 2.200 1.500 3 3.500 3.500-.3 1.700-3.500 2-.4 1.500-2.200 1-1.200 1.200-3.500 1.200T11.500 23.300q-1.800.5-2.200-1-3.200-.3-3.500-2 2-.5 3.500-3.500.5-1-1.500-2.200 0-1.100 2-.6v-3Q10 6 15 6z"/></svg><b class="badge">10</b></div>
      <div class="app"><svg width="29" height="29" viewBox="0 0 29 29"><circle cx="14.500" cy="14.500" r="14.500" fill="#fff"/><g stroke-width="3.400" stroke-linecap="round"><path stroke="#36c5f0" d="M12 6.500v.2M6.500 12h5.500"/><path stroke="#2eb67d" d="M17 6.500V12M22.500 12h.1"/><path stroke="#e01e5a" d="M12 17v5.500M6.500 17h.1"/><path stroke="#ecb22e" d="M17 17h5.500M17 22.500v.1"/></g></svg></div>
      <div class="app"><svg width="27" height="27" viewBox="0 0 27 27"><circle cx="13.500" cy="13.500" r="13.500" fill="#2298d4"/><path fill="#fff" d="M5 13.500L20.500 7l-2.800 13.500-4.500-3.300-2.400 2.500-.5-4 6.700-6-8.500 5z"/></svg></div>
      <div class="app"><svg width="30" height="30" viewBox="0 0 30 30"><rect x="9" y="2" width="19" height="19" rx="2" fill="none" stroke="#1296d4" stroke-width="4.200"/><rect x="2" y="9.500" width="19" height="19" rx="2" fill="none" stroke="#f38b00" stroke-width="4.200"/><path d="M9 16.500V12M16 21h5" stroke="#1296d4" stroke-width="4.200"/></svg></div>
      <div class="app"><svg width="30" height="29" viewBox="0 0 30 29"><path fill="url(#gDia)" d="M15 0l15 14.500L15 29 0 14.500z"/></svg></div>
      <div class="app"><svg width="30" height="30" viewBox="0 0 30 30"><circle cx="15" cy="15" r="15" fill="#e6e6e6"/><path fill="#49c11a" d="M15 2l6 12-6 14-6-14z"/><path fill="#9df05c" d="M15 2v26L9 14z"/><path fill="#1f7a12" d="M15 13l6 1-6 14zM9 14l6-3v5z"/></svg></div>
      <div class="app run"><svg width="30" height="28" viewBox="0 0 30 28"><path fill="#41a5ee" d="M8 0h22v7H8z"/><path fill="#2b7cd3" d="M8 7h22v7H8z"/><path fill="#185abd" d="M8 14h22v7H8z"/><path fill="#103f91" d="M8 21h22v7H8z"/><rect y="7" width="16" height="16" rx="1" fill="#1a55b8"/></svg><b class="word">W</b></div>
      <div class="app run"><svg width="27" height="27" viewBox="0 0 27 27"><rect width="27" height="27" rx="4" fill="#b30b00"/><path d="M13 5q-1.700 0-1 3.500 2 7 9 9.500 1.500 0 .5-1-5-1.800-15.500 2.200-1.300 1.800.3 1.300Q11 17 13.800 8 14 5 13 5z" fill="none" stroke="#fff" stroke-width="1.500"/></svg></div>
    </div>
    <div class="tray">
      <svg class="t1" width="14" height="9" viewBox="0 0 14 9"><path d="M1 8l6-6 6 6" fill="none" stroke="#fff" stroke-width="1.800"/></svg>
      <svg class="t2" width="18" height="16" viewBox="0 0 18 16" fill="#fff"><path d="M4.500 0L9 2.800 4.500 5.600 0 2.800zM13.500 0L18 2.800l-4.500 2.800L9 2.800zM4.500 5.600L9 8.400l-4.500 2.800L0 8.400zM13.500 5.600L18 8.400l-4.500 2.800L9 8.400zM9 9.800l4.500 2.700L9 15.500l-4.500-3z"/></svg>
      <svg class="t3" width="21" height="16" viewBox="0 0 21 16"><path fill="#8f8f8f" d="M4 14q-4-1-3.500-4T5 6.500Q6 1 11 1t6 5q4 1 3.500 4.500T17 14z"/><path d="M2 1l17 14.500" stroke="#202024" stroke-width="3"/><path d="M2.500.500l16.500 15" stroke="#eee" stroke-width="1.200"/></svg>
      <svg class="t4" width="20" height="16" viewBox="0 0 20 16"><g fill="none" stroke="#fff" stroke-width="1.500"><path d="M.8 6.200Q10-3 19.200 6.200M3.700 9.200q6.300-6 12.600 0M6.600 12q3.400-3 6.800 0"/></g><circle cx="10" cy="14" r="1.700" fill="#fff"/></svg>
      <svg class="t5" width="20" height="16" viewBox="0 0 20 16"><path d="M1 5.500h3L9 1.500v13l-5-4H1zM13 5.500l5 5M18 5.500l-5 5" fill="none" stroke="#fff" stroke-width="1.300"/></svg>
      <svg class="t6" width="20" height="18" viewBox="0 0 20 18"><rect x="1.500" y="5" width="15.500" height="11.500" rx="2.500" fill="none" stroke="#fff" stroke-width="1.400"/><path fill="#fff" d="M4 7.500h10.500V14H4zM18 8.500h2v4h-2z"/><path fill="#fff" stroke="#202024" stroke-width=".8" d="M3.500 0L0 7h2.500L1.500 11.500 6.500 5H4l2-5z"/></svg>
      <div class="clock"><div>7:09 PM</div><div>10/5/2025</div></div>
    </div>
  </div>
</div>
</body>
</html>
```
FILE: styles.css
```css
* { box-sizing: border-box; }
body { margin: 0; overflow: hidden; background: #fff; }
svg { display: block; flex: none; overflow: visible; }
.defs { position: absolute; }
.screen { width: 1920px; height: 1200px; display: flex; flex-direction: column; overflow: hidden; font-family: "Open Sans", "Noto Sans", sans-serif; }
.sep { display: block; width: 2px; height: 20px; border-radius: 1px; background: #6b5039; flex: none; }

/* tab strip */
.tabstrip { height: 50px; flex: none; background: #2d1c08; display: flex; align-items: center; padding-left: 8px; }
.tabsearch { width: 35px; height: 34px; border-radius: 11px; background: #4a3722; display: flex; align-items: center; justify-content: center; }
.tabs { display: flex; height: 50px; margin-left: 5px; }
.tab { width: 113.700px; height: 50px; display: flex; align-items: center; padding-left: 12px; color: #e6c39f; font-size: 14px; position: relative; }
.tab:nth-child(-n+4) { width: 114.800px; }
.tab:not(.active):not(:nth-child(13))::after { content: ""; width: 2px; height: 20px; border-radius: 1px; background: #4a3722; margin-left: 17px; }
.fav { width: 20px; height: 20px; margin: 0 10px 0 0; }
.fav.ring { width: 26px; height: 26px; margin: 0 7px 0 -3px; }
.fav.small { width: 18px; height: 18px; margin: 0 11px 0 1px; }
.white { color: #fff; }
.cream { color: #f3e3d0; }
.name { width: 28px; overflow: hidden; white-space: nowrap; letter-spacing: -.3px; -webkit-mask-image: linear-gradient(90deg, #000 50%, transparent); mask-image: linear-gradient(90deg, #000 50%, transparent); }
.x { width: 11px; height: 11px; margin-left: 14px; }
.tab.active { color: #f3e3d0; z-index: 0; }
.tab.active::before { content: ""; position: absolute; z-index: -1; left: 3px; top: 8px; width: 106px; height: 42px; border-radius: 12px 12px 0 0; background: #4a3721; }
.tab.active::after { content: ""; position: absolute; z-index: -1; left: -9px; bottom: 0; width: 130px; height: 12px; background: radial-gradient(circle at 0 0, transparent 11.500px, #4a3721 12px) 0 0/12px 12px no-repeat, radial-gradient(circle at 100% 0, transparent 11.500px, #4a3721 12px) 100% 0/12px 12px no-repeat; }
.newtab { margin-left: 13px; }
.winbtns { display: flex; gap: 43px; margin-left: auto; padding-right: 22px; }

/* toolbar */
.toolbar { height: 50px; flex: none; background: #4a3721; border-radius: 10px 10px 0 0; box-shadow: 0 -10px 0 0 #2d1c08; display: flex; align-items: flex-start; padding-top: 8px; }
.nav { display: flex; gap: 31.500px; padding: 13px 0 0 20px; width: 155px; flex: none; }
.omnibox { width: 1457px; height: 42px; border-radius: 21px; background: #33220f; display: flex; align-items: center; padding-left: 6px; flex: none; }
.siteinfo { width: 30px; height: 30px; border-radius: 50%; background: #4a3721; display: flex; align-items: center; justify-content: center; }
.url { margin-left: 10px; font-size: 16.500px; letter-spacing: -.08px; color: #fbeada; white-space: nowrap; }
.path { color: #dcc3a8; }
.inst { margin-left: auto; }
.bmstar { margin: 0 19px 0 18px; color: #dcc9b4; }
.ext { display: flex; align-items: center; height: 42px; padding-left: 22px; gap: 23.700px; width: 308px; }
.ext .sep { margin: 0 -3px 0 -2px; }
.ext svg:last-child { margin-left: 5px; }

.bookmarks { height: 51px; flex: none; background: #4a3721; border-bottom: 1px solid #5e4637; display: flex; align-items: center; color: #e0cab2; font-size: 14.100px; line-height: 20px; padding: 0 0 1px 15px; }
.bm { display: flex; align-items: center; white-space: nowrap; }
.bookmarks > .sep { margin: 0 20px; }
.gm { width: 86px; gap: 8px; }
.yt { width: 107px; gap: 7px; letter-spacing: -.1px; }
.mp { width: 84px; gap: 7px; }
.aa { gap: 8px; letter-spacing: .15px; }
.allbm { display: flex; align-items: center; margin-left: auto; width: 165px; white-space: nowrap; }
.allbm svg { margin: 0 11px 0 20px; }

/* page */
.page { height: 989px; flex: none; background: #fff; position: relative; overflow: hidden; color: #262730; font-family: "Noto Sans CJK SC", "Noto Sans CJK JP", sans-serif; }
.appbar { height: 75px; display: flex; align-items: center; justify-content: space-between; padding-left: 31px; font-size: 15.700px; }
.actions { display: flex; align-items: center; width: 250px; }
.a1 { margin-left: 24px; }
.a2 { margin-left: 24px; }
.a3 { margin-left: 27px; }
.a4 { margin-left: 30px; }
.main { width: 1707px; margin-left: 100px; }
h1, h2, h3, p { margin: 0; white-space: nowrap; display: flex; align-items: center; }
h1 { height: 66px; margin-top: 16px; font-size: 49.350px; font-weight: 700; line-height: 66px; }
.i-pad { margin: 17px 21px 0 10px; }
.lead { height: 32px; margin-top: 21px; font-size: 17.910px; }
h2 { height: 54px; font-size: 40.300px; line-height: 54px; font-weight: 500; -webkit-text-stroke: .5px #262730; }
.h-prog { margin-top: 40px; }
.i-cup { margin: 1px 20px 0 12px; }
.metrics { display: grid; grid-template-columns: repeat(4, 1fr); column-gap: 20px; margin-top: 22px; }
.label { height: 30px; display: flex; align-items: center; gap: 7px; font-size: 15.670px; }
.value { height: 54px; line-height: 54px; margin-top: 1px; font-size: 40.300px; }
.ptext { height: 28px; line-height: 28px; margin-top: 28px; font-size: 15.670px; }
.bar { height: 10px; margin-top: 8px; border-radius: 5px; background: #f0f2f6; }
.h-act { margin-top: 38px; }
.i-dart { margin: 2px 17px 0 8px; }
.subtabs { height: 54px; margin-top: 21px; border-bottom: 3px solid #e6e6e9; display: flex; gap: 20px; font-size: 15.670px; }
.st { height: 54px; line-height: 51px; display: flex; align-items: center; padding: 0 0 3px 4px; gap: 6px; white-space: nowrap; }
.st.on { color: #1f77b4; border-bottom: 3px solid #1f77b4; padding-bottom: 0; gap: 9px; }
.st:last-child { gap: 7px; }
h3 { height: 42px; margin-top: 34px; font-size: 31.350px; font-weight: 500; line-height: 42px; -webkit-text-stroke: .4px #262730; }
.i-memo { margin: 0 14px 0 11px; }
.flabel { height: 26px; line-height: 26px; margin-top: 23px; font-size: 15.670px; }
.flabel.second { margin-top: 22px; }
.select { height: 50px; margin-top: 7px; border-radius: 10px; background: #f0f2f6; display: flex; align-items: center; justify-content: space-between; padding: 0 19px 0 16px; font-size: 17.910px; }
.select span { line-height: 44px; height: 48px; }
.start { width: 145px; height: 50px; margin-top: 20px; border-radius: 10px; background: #1f77b4; color: #fff; display: flex; align-items: center; gap: 7px; padding: 0 0 3px 19px; font-size: 17.910px; white-space: nowrap; }
.scrollthumb { position: absolute; left: 1910px; top: 75px; width: 7px; height: 341px; border-radius: 4px; background: #a8a9ad; }
.manage { position: absolute; right: 0; bottom: 0; width: 184px; height: 55px; border-radius: 10px 0 0 0; background: #0e1117; color: #fff; display: flex; align-items: center; gap: 24px; padding: 0 0 2px 33px; font-size: 15.670px; white-space: nowrap; font-weight: 500; }
.manage span { letter-spacing: -.1px; }

/* taskbar */
.taskbar { height: 60px; flex: none; background: #202023; border-top: 1px solid #454545; display: flex; align-items: center; color: #fff; }
.weather { width: 203px; padding: 0 0 3px 26px; position: relative; }
.weather span { position: absolute; left: 38px; top: -7px; width: 28px; height: 22px; line-height: 22px; border-radius: 11px; background: #2b2b2e; font-size: 14px; padding-left: 4px; letter-spacing: -.4px; white-space: nowrap; }
.apps-row { display: flex; height: 59px; }
.app { width: 55.050px; height: 59px; display: flex; align-items: center; justify-content: center; position: relative; z-index: 0; padding-bottom: 1px; }
.open::before { content: ""; position: absolute; z-index: -1; left: 3px; top: 4px; width: 50px; height: 50px; border-radius: 6px; background: #313135; border: 1px solid #3c3c40; }
.open::after { content: ""; position: absolute; bottom: 5px; width: 20px; height: 4px; border-radius: 2px; background: #f47f67; }
.run::after { content: ""; position: absolute; bottom: 5px; width: 8px; height: 4px; border-radius: 2px; background: #9a9a9a; }
.app b { position: absolute; line-height: 1; }
.tag { font-size: 8px; text-align: center; border-radius: 2px; }
.app .tag { line-height: 9px; }
.pre { left: 22px; top: 35px; width: 20px; height: 9px; background: #ffc60a; color: #111; }
.beta { left: 18px; top: 35px; width: 20px; height: 9px; background: #58c8e8; color: #10303e; font-size: 7px; }
.teams-t { left: 16px; top: 20px; font-size: 13px; }
.teams-ya { left: 30px; top: 31px; font-size: 7px; color: #9a6b50; }
.app .badge { left: 24px; top: 8px; height: 20px; width: 23px; border-radius: 10px; background: #f47f67; color: #111; font-size: 14px; font-weight: 400; line-height: 20px; text-align: center; }
.app .badge.wide { width: 34px; left: 20px; }
.n24 { font-size: 18px; letter-spacing: -1px; top: 20px; }
.pc { font-size: 10px; left: 22px; top: 19px; }
.word { left: 15px; top: 22px; font-size: 12px; }
.tray { display: flex; align-items: center; margin-left: auto; width: 311px; padding-bottom: 1px; }
.t2 { margin-left: 23px; }
.t3 { margin-left: 21px; }
.t4 { margin-left: 20px; }
.t5 { margin-left: 9px; }
.t6 { margin-left: 10px; }
.clock { margin-left: auto; margin-right: 24px; text-align: right; font-size: 14.300px; line-height: 20px; white-space: nowrap; }
```
